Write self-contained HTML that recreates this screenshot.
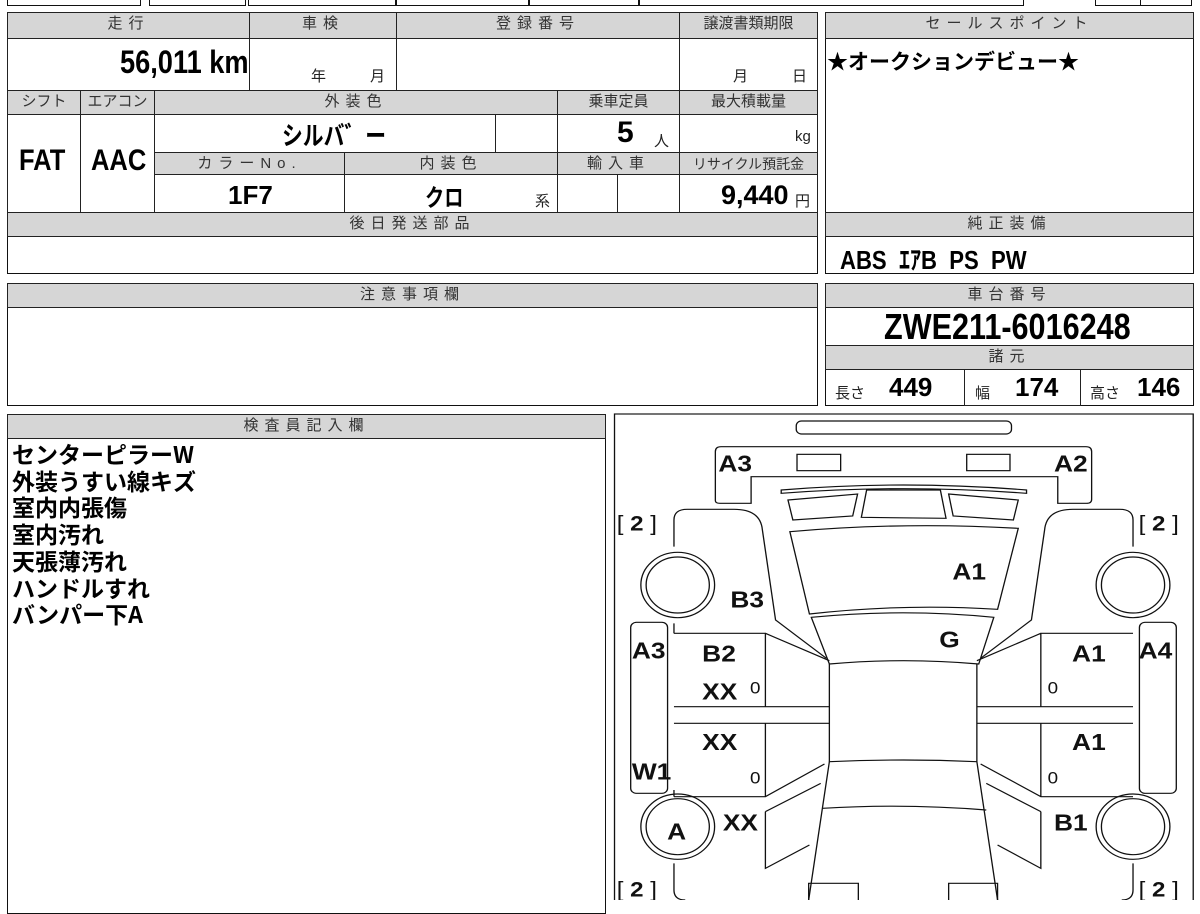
<!DOCTYPE html>
<html><head><meta charset="utf-8"><style>
body{margin:0;width:1200px;height:900px;background:#fff;position:relative;overflow:hidden;font-family:"Liberation Sans","Noto Sans CJK JP",sans-serif;color:#000}
.b{position:absolute;border:1.5px solid #111;box-sizing:border-box}
.h{position:absolute;background:#d6d6d6;border:1px solid #222;box-sizing:border-box;font-size:15px;text-align:center;color:#333;letter-spacing:6px;line-height:22px;white-space:nowrap}
.c{position:absolute;border:1px solid #222;box-sizing:border-box;white-space:nowrap}
.n{font-family:"Liberation Sans Narrow","Liberation Sans","Noto Sans CJK JP",sans-serif;font-weight:bold;position:absolute;white-space:nowrap}
.s{position:absolute;font-size:15px;color:#222;white-space:nowrap}
.insp{position:absolute;left:12px;top:440px;font-size:23px;font-weight:bold;line-height:26.7px;font-family:"Noto Sans CJK JP",sans-serif}
</style></head><body>
<div class="b" style="left:7px;top:-10px;width:134px;height:16px"></div>
<div class="b" style="left:149px;top:-10px;width:97px;height:16px"></div>
<div class="b" style="left:248px;top:-10px;width:148px;height:16px"></div>
<div class="b" style="left:396px;top:-10px;width:133px;height:16px"></div>
<div class="b" style="left:529px;top:-10px;width:110px;height:16px"></div>
<div class="b" style="left:639px;top:-10px;width:385px;height:16px"></div>
<div class="b" style="left:1095px;top:-10px;width:97px;height:16px"></div>
<div style="position:absolute;left:1140px;top:-10px;width:1px;height:16px;background:#111"></div>

<div class="b" style="left:7px;top:12px;width:811px;height:262px"></div>
<div class="h" style="left:7px;top:12px;width:243px;height:27px">走行</div>
<div class="h" style="left:249px;top:12px;width:148px;height:27px">車検</div>
<div class="h" style="left:396px;top:12px;width:284px;height:27px">登録番号</div>
<div class="h" style="left:679px;top:12px;width:139px;height:27px;letter-spacing:0">譲渡書類期限</div>
<div class="c" style="left:7px;top:38px;width:243px;height:53px"></div>
<div class="c" style="left:249px;top:38px;width:148px;height:53px"></div>
<div class="c" style="left:396px;top:38px;width:284px;height:53px"></div>
<div class="c" style="left:679px;top:38px;width:139px;height:53px"></div>
<div class="n" style="left:120px;top:44px;font-size:32px;transform:scaleX(.85);transform-origin:left">56,011 km</div>
<div class="s" style="left:311px;top:65px">年</div><div class="s" style="left:370px;top:65px">月</div>
<div class="s" style="left:733px;top:65px">月</div><div class="s" style="left:792px;top:65px">日</div>

<div class="h" style="left:7px;top:90px;width:74px;height:25px;letter-spacing:0">シフト</div>
<div class="h" style="left:80px;top:90px;width:75px;height:25px;letter-spacing:0">エアコン</div>
<div class="h" style="left:154px;top:90px;width:404px;height:25px">外装色</div>
<div class="h" style="left:557px;top:90px;width:123px;height:25px;letter-spacing:0">乗車定員</div>
<div class="h" style="left:679px;top:90px;width:139px;height:25px;letter-spacing:0">最大積載量</div>
<div class="c" style="left:7px;top:114px;width:74px;height:99px"></div>
<div class="c" style="left:80px;top:114px;width:75px;height:99px"></div>
<div class="n" style="left:19px;top:144px;font-size:30px;transform:scaleX(.85);transform-origin:left">FAT</div>
<div class="n" style="left:91px;top:144px;font-size:30px;transform:scaleX(.85);transform-origin:left">AAC</div>
<div class="c" style="left:154px;top:114px;width:342px;height:39px"></div>
<div class="c" style="left:495px;top:114px;width:63px;height:39px"></div>
<div class="c" style="left:557px;top:114px;width:123px;height:39px"></div>
<div class="c" style="left:679px;top:114px;width:139px;height:39px"></div>
<div class="n" style="left:282px;top:116px;font-size:26px;font-family:'Noto Sans CJK JP',sans-serif;transform:scaleX(.8);transform-origin:left">シルバ゛ー</div>
<div class="n" style="left:617px;top:116px;font-size:30px">5</div><div class="s" style="left:654px;top:130px">人</div>
<div class="s" style="left:795px;top:128px">kg</div>
<div class="h" style="left:154px;top:152px;width:191px;height:23px">カラーNo.</div>
<div class="h" style="left:344px;top:152px;width:214px;height:23px">内装色</div>
<div class="h" style="left:557px;top:152px;width:123px;height:23px">輸入車</div>
<div class="h" style="left:679px;top:152px;width:139px;height:23px;letter-spacing:0;font-size:14px">リサイクル預託金</div>
<div class="c" style="left:154px;top:174px;width:191px;height:39px"></div>
<div class="c" style="left:344px;top:174px;width:214px;height:39px"></div>
<div class="c" style="left:557px;top:174px;width:61px;height:39px"></div>
<div class="c" style="left:617px;top:174px;width:63px;height:39px"></div>
<div class="c" style="left:679px;top:174px;width:139px;height:39px"></div>
<div class="n" style="left:228px;top:180px;font-size:26px">1F7</div>
<div class="n" style="left:425px;top:178px;font-size:24px;font-family:'Noto Sans CJK JP',sans-serif;transform:scaleX(.8);transform-origin:left">クロ</div>
<div class="s" style="left:535px;top:190px">系</div>
<div class="n" style="left:721px;top:180px;font-size:27px">9,440</div><div class="s" style="left:795px;top:190px">円</div>
<div class="h" style="left:7px;top:212px;width:811px;height:25px">後日発送部品</div>

<div class="b" style="left:825px;top:12px;width:369px;height:262px"></div>
<div class="h" style="left:825px;top:12px;width:369px;height:27px">セールスポイント</div>
<div style="position:absolute;left:827px;top:46px;font-size:21px;font-weight:bold;font-family:'Noto Sans CJK JP',sans-serif">★オークションデビュー★</div>
<div class="h" style="left:825px;top:212px;width:369px;height:25px">純正装備</div>
<div class="n" style="left:840px;top:240px;font-size:26px;transform:scaleX(.85);transform-origin:left">ABS&nbsp; ｴｱB&nbsp; PS&nbsp; PW</div>

<div class="b" style="left:7px;top:283px;width:811px;height:123px"></div>
<div class="h" style="left:7px;top:283px;width:811px;height:25px">注意事項欄</div>
<div class="b" style="left:825px;top:283px;width:369px;height:123px"></div>
<div class="h" style="left:825px;top:283px;width:369px;height:25px">車台番号</div>
<div class="n" style="left:884px;top:306px;font-size:36px;transform:scaleX(.85);transform-origin:left">ZWE211-6016248</div>
<div class="h" style="left:825px;top:345px;width:369px;height:25px">諸元</div>
<div class="c" style="left:964px;top:369px;width:117px;height:37px"></div>
<div class="s" style="left:835px;top:382px">長さ</div><div class="n" style="left:889px;top:372px;font-size:26px">449</div>
<div class="s" style="left:975px;top:382px">幅</div><div class="n" style="left:1015px;top:372px;font-size:26px">174</div>
<div class="s" style="left:1090px;top:382px">高さ</div><div class="n" style="left:1137px;top:372px;font-size:26px">146</div>

<div class="b" style="left:7px;top:414px;width:599px;height:500px"></div>
<div class="h" style="left:7px;top:414px;width:599px;height:25px">検査員記入欄</div>
<div class="insp">センターピラーW<br>外装うすい線キズ<br>室内内張傷<br>室内汚れ<br>天張薄汚れ<br>ハンドルすれ<br>バンパー下A</div>

<svg style="position:absolute;left:610px;top:410px" width="590" height="490" viewBox="0 0 1568 1470" preserveAspectRatio="none">
<g fill="none" stroke="#111" stroke-width="3.5">
<rect x="12" y="12" width="1538" height="1500"/>
<rect x="495" y="33" width="572" height="39" rx="14"/>
<path d="M280,272 L280,125 Q280,110 295,110 L1265,110 Q1280,110 1280,125 L1280,268 Q1280,280 1266,280 L1190,280 L1190,200 L375,200 L375,280 L292,280 Q280,280 280,272Z"/>
<rect x="497" y="133" width="116" height="49"/>
<rect x="948" y="133" width="115" height="49"/>
<path d="M455,240 Q780,210 1107,240 L1107,250 Q780,222 455,250Z"/>
<path d="M473,270 L658,252 L645,318 L486,330Z"/>
<path d="M682,240 L878,240 L893,325 L668,322Z"/>
<path d="M900,252 L1085,270 L1072,330 L912,318Z"/>
<path d="M478,365 Q780,335 1085,355 L1030,598 Q780,580 530,612Z"/>
<path d="M535,622 Q780,595 1020,622 L980,762 Q780,742 583,762Z"/>
<path d="M583,762 L583,1055 Q780,1045 975,1055 L975,762"/>
<path d="M583,1055 L528,1470 M975,1055 L1030,1470 M565,1195 Q780,1180 1000,1200"/>
<path d="M170,410 L170,330 Q170,298 205,298 L330,298 Q400,298 405,360 L440,630 L575,745"/>
<path d="M1390,410 L1390,330 Q1390,298 1355,298 L1230,298 Q1160,298 1155,360 L1120,630 L985,745"/>
<circle cx="180" cy="525" r="98"/><circle cx="180" cy="525" r="84"/>
<circle cx="1390" cy="525" r="98"/><circle cx="1390" cy="525" r="84"/>
<circle cx="180" cy="1250" r="98"/><circle cx="180" cy="1250" r="84"/>
<circle cx="1390" cy="1250" r="98"/><circle cx="1390" cy="1250" r="84"/>
<rect x="55" y="637" width="98" height="513" rx="15"/>
<rect x="1407" y="637" width="98" height="513" rx="15"/>
<path d="M170,670 L413,670 L413,890 M413,670 L583,752 M170,890 L583,890 M170,940 L583,940 M413,940 L413,1160 M170,1160 L413,1160 L570,1062 M170,670 L170,640 M170,1160 L170,1140"/>
<path d="M1390,670 L1145,670 L1145,890 M1145,670 L975,752 M1390,890 L975,890 M1390,940 L975,940 M1145,940 L1145,1160 M1390,1160 L1145,1160 L985,1062"/>
<path d="M413,1205 L560,1120 M413,1205 L413,1375 L530,1305 M1145,1205 L1000,1120 M1145,1205 L1145,1375 L1030,1305"/>
<path d="M170,1360 L170,1440 Q170,1470 200,1470 M1390,1360 L1390,1440 Q1390,1470 1360,1470"/>
<path d="M528,1470 L528,1420 L660,1420 L660,1470 M900,1470 L900,1420 L1030,1420 L1030,1470"/>
</g>
<g font-family="Liberation Sans,sans-serif" font-weight="bold" font-size="70" fill="#111">
<text x="288" y="185">A3</text><text x="1180" y="185">A2</text>
<text x="910" y="508">A1</text><text x="320" y="592">B3</text>
<text x="875" y="712">G</text>
<text x="58" y="745">A3</text><text x="245" y="755">B2</text>
<text x="1228" y="755">A1</text><text x="1405" y="745">A4</text>
<text x="245" y="868">XX</text><text x="245" y="1020">XX</text>
<text x="1228" y="1020">A1</text><text x="58" y="1108">W1</text>
<text x="152" y="1288">A</text><text x="300" y="1262">XX</text>
<text x="1180" y="1262">B1</text>
</g>
<g font-family="Liberation Sans Narrow,Liberation Sans,sans-serif" font-size="50" fill="#111">
<text x="372" y="850">0</text><text x="1163" y="850">0</text>
<text x="372" y="1120">0</text><text x="1163" y="1120">0</text>
</g>
<g font-family="Liberation Sans,sans-serif" font-size="64" fill="#111">
<text x="18" y="362">[ <tspan font-weight="bold">2</tspan> ]</text>
<text x="1405" y="362">[ <tspan font-weight="bold">2</tspan> ]</text>
<text x="18" y="1460">[ <tspan font-weight="bold">2</tspan> ]</text>
<text x="1405" y="1460">[ <tspan font-weight="bold">2</tspan> ]</text>
</g>
</svg>
</body></html>
